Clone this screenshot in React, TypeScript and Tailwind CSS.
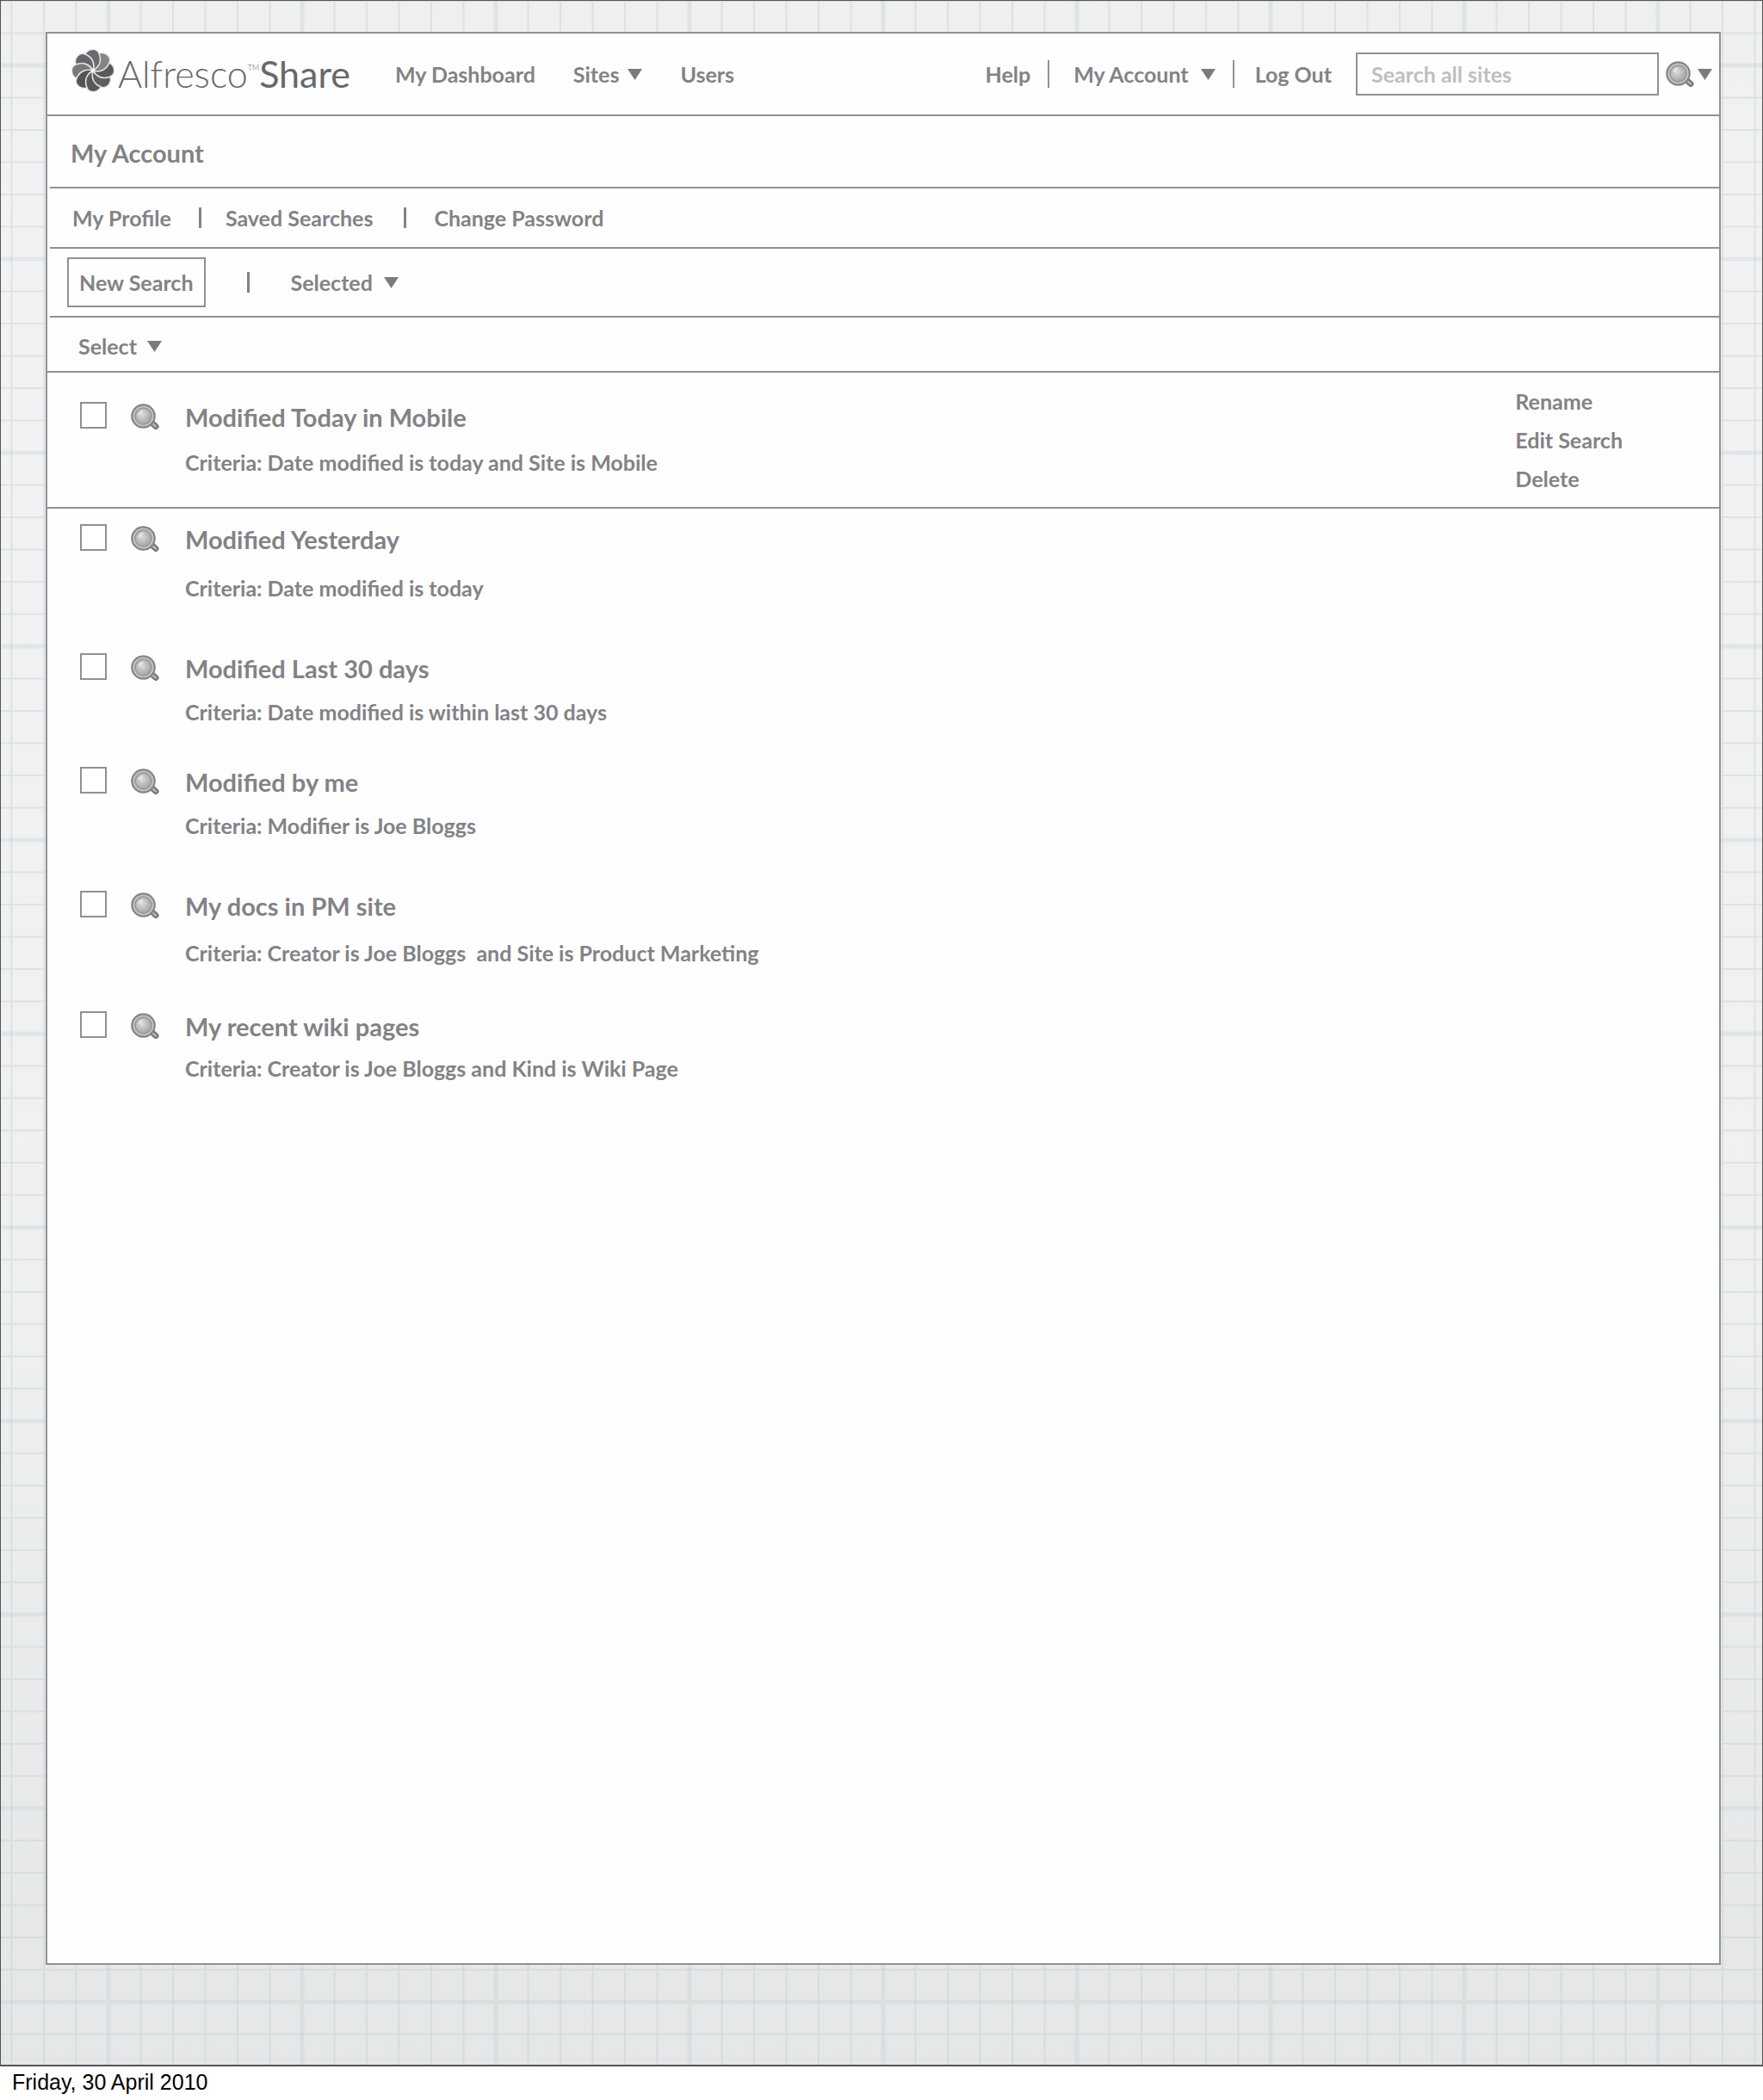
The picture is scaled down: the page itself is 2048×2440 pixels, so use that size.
const savedSearches = [
    { id: 'today-mobile', title: 'Modified Today in Mobile', criteria: 'Criteria: Date modified is today and Site is Mobile', row: 'pt-8 pb-8.5', gap: 'gap-3.5', active: true },
    { id: 'yesterday', title: 'Modified Yesterday', criteria: 'Criteria: Date modified is today', row: 'pt-4', gap: 'gap-4.5' },
    { id: 'last-30', title: 'Modified Last 30 days', criteria: 'Criteria: Date modified is within last 30 days', row: 'pt-14', gap: 'gap-3' },
    { id: 'by-me', title: 'Modified by me', criteria: 'Criteria: Modifier is Joe Bloggs', row: 'pt-11', gap: 'gap-3' },
    { id: 'pm-docs', title: 'My docs in PM site', criteria: 'Criteria: Creator is Joe Bloggs\u00a0 and Site is Product Marketing', row: 'pt-14', gap: 'gap-4' },
    { id: 'wiki', title: 'My recent wiki pages', criteria: 'Criteria: Creator is Joe Bloggs and Kind is Wiki Page', row: 'pt-12', gap: 'gap-2.5' },
];

function Caret() {
    return (
        <svg className="h-[13px] w-[17px] shrink-0" viewBox="0 0 17 13" aria-hidden="true">
            <path d="M0 0h17L8.500 13z" fill="#7b7a7d" />
        </svg>
    );
}

function Magnifier() {
    return (
        <svg className="h-[31px] w-[33px] shrink-0" viewBox="0 0 33 31" aria-hidden="true">
            <defs>
                <radialGradient id="lens" cx="0.42" cy="0.4" r="0.65">
                    <stop offset="0" stopColor="#dededf" />
                    <stop offset="0.5" stopColor="#bdbdbf" />
                    <stop offset="1" stopColor="#a2a2a4" />
                </radialGradient>
            </defs>
            <path d="M23 21l6 5.500" stroke="#77777a" strokeWidth="7" strokeLinecap="round" />
            <path d="M25.500 23.500l3.500 3" stroke="#b5b5b7" strokeWidth="2.500" strokeLinecap="round" />
            <circle cx="14.500" cy="14.500" r="13.200" fill="#c3c3c5" stroke="#858588" strokeWidth="2.200" />
            <circle cx="14.500" cy="14.500" r="9.500" fill="url(#lens)" stroke="#98989b" strokeWidth="1.500" />
            <path d="M8.500 13.500c.5-3.500 3-5.500 6-5.500-1 2.500-3 4.500-6 5.500z" fill="#e9e9ea" />
        </svg>
    );
}

const petals = ['#6a6a6d', '#858588', '#59595c', '#5e5e61', '#58585b', '#545457', '#79797c', '#66666a'];

function Flower() {
    return (
        <svg className="mb-2 h-[50px] w-[50px] shrink-0" viewBox="-25 -25 50 50" aria-hidden="true">
            {petals.map((fill, i) => (
                <path
                    key={i}
                    d="M0 0C2-6 1-15-9-19C-6-25.500 4-27 7.100-19.800C11.300-9.900 5.660-2.830 0 0z"
                    fill={fill}
                    stroke="#e4e4e6"
                    strokeWidth="1.400"
                    transform={`rotate(${i * 45})`}
                />
            ))}
            <circle r="2.500" fill="#f4f4f5" />
        </svg>
    );
}

// Squared paper behind the wireframe, every sixth line is heavier
function GridPaper() {
    return (
        <svg className="absolute inset-0 h-full w-full" aria-hidden="true">
            <defs>
                <linearGradient id="paper" x1="0" y1="0" x2="0" y2="1">
                    <stop offset="0" stopColor="#eeefee" />
                    <stop offset="0.1" stopColor="#f2f2f4" />
                    <stop offset="0.6" stopColor="#eff0f0" />
                    <stop offset="1" stopColor="#e4e6e7" />
                </linearGradient>
                <pattern id="squares" x="122" y="72" width="225" height="225" patternUnits="userSpaceOnUse">
                    <path d="M40.500 0v225M78 0v225M115.500 0v225M153 0v225M190.500 0v225M0 40.500h225M0 78h225M0 115.500h225M0 153h225M0 190.500h225" stroke="#bccdd0" strokeOpacity="0.38" strokeWidth="2" />
                    <path d="M3 0v225M0 3h225" stroke="#c0cfd3" strokeOpacity="0.32" strokeWidth="5" />
                </pattern>
            </defs>
            <rect width="100%" height="100%" fill="url(#paper)" />
            <rect width="100%" height="100%" fill="url(#squares)" />
        </svg>
    );
}

function App() {
    return (
        <div className="flex min-h-screen flex-col bg-white">
            <div className="relative flex flex-1 flex-col border border-b-2 border-[#545456] pt-9 pr-12 pb-[116px] pl-13">
                <GridPaper />
                <main className="relative flex-1 border-2 border-[#919094] bg-[#fefefe] font-['Lato',sans-serif] text-[25px] leading-9 font-bold text-[#838286]">
                    <header className="flex h-24 items-center border-b-2 border-[#919094] pr-2 pl-7">
                        <a href="#" aria-label="Alfresco Share" className="flex items-center gap-1 text-[43px] leading-[50px] font-normal text-[#68686b]">
                            <Flower />
                            <span className="flex items-center">
                                <span className="font-light">Alfresco</span>
                                <span className="self-start text-[9px] leading-9 font-light">TM</span>
                                <span>Share</span>
                            </span>
                        </a>
                        <nav className="ml-13 flex items-center gap-11">
                            <a href="#">My Dashboard</a>
                            <button type="button" className="flex items-center gap-2.5">Sites <Caret /></button>
                            <a href="#">Users</a>
                        </nav>
                        <nav className="ml-auto flex items-center">
                            <a href="#">Help</a>
                            <span className="mr-7 ml-5 h-8 w-0.5 bg-[#919094]" />
                            <button type="button" className="flex items-center gap-3.5">My Account <Caret /></button>
                            <span className="mr-6 ml-5 h-8 w-0.5 bg-[#919094]" />
                            <a href="#">Log Out</a>
                        </nav>
                        <form className="ml-7 flex items-center gap-2">
                            <input
                                type="text"
                                aria-label="Search all sites"
                                placeholder="Search all sites"
                                className="h-[50px] w-[352px] border-2 border-[#919094] px-4 placeholder:text-[#bfbec1] focus:outline-none"
                            />
                            <button type="button" aria-label="Search options" className="flex items-center gap-1">
                                <Magnifier />
                                <Caret />
                            </button>
                        </form>
                    </header>
                    <div className="ml-[3px] flex h-[84px] items-center border-b-2 border-[#919094] pt-1 pl-6">
                        <h1 className="text-[29px] leading-10">My Account</h1>
                    </div>
                    <nav className="ml-[3px] flex h-[70px] items-center border-b-2 border-[#919094] pl-6.5">
                        <a href="#">My Profile</a>
                        <span className="mr-7 ml-8 h-6 w-[3px] bg-[#838286]" />
                        <a href="#">Saved Searches</a>
                        <span className="mr-8 ml-9 h-6 w-[3px] bg-[#838286]" />
                        <a href="#">Change Password</a>
                    </nav>
                    <div className="ml-[3px] flex h-20 items-center border-b-2 border-[#919094] pl-5">
                        <button type="button" className="h-[58px] border-2 border-[#919094] px-3">New Search</button>
                        <span className="mx-12 h-6 w-[3px] bg-[#838286]" />
                        <label className="flex items-center gap-3">
                            <select aria-label="Selected items" className="appearance-none focus:outline-none">
                                <option>Selected</option>
                            </select>
                            <Caret />
                        </label>
                    </div>
                    <div className="flex h-16 items-center border-b-2 border-[#919094] pt-1 pl-9">
                        <label className="flex items-center gap-3">
                            <select aria-label="Select searches" className="appearance-none focus:outline-none">
                                <option>Select</option>
                            </select>
                            <Caret />
                        </label>
                    </div>
                    <ul>
                        {savedSearches.map((search) => (
                            <li key={search.id} className={search.active ? 'flex justify-between border-b-2 border-[#919094]' : 'flex'}>
                                <div className={`flex items-start pl-9.5 ${search.row}`}>
                                    <input id={search.id} type="checkbox" className="mt-0.5 mr-7 size-[31px] appearance-none border-2 border-[#919094] bg-white" />
                                    <span className="mt-1 mr-7.5"><Magnifier /></span>
                                    <div className={`flex flex-col ${search.gap}`}>
                                        <label htmlFor={search.id} className="text-[29px] leading-10">{search.title}</label>
                                        <p>{search.criteria}</p>
                                    </div>
                                </div>
                                {search.active && (
                                    <div className="mr-28 flex flex-col self-center leading-[45px]">
                                        <a href="#">Rename</a>
                                        <a href="#">Edit Search</a>
                                        <a href="#">Delete</a>
                                    </div>
                                )}
                            </li>
                        ))}
                    </ul>
                </main>
            </div>
            <footer className="h-[39px] px-3.5 font-['Liberation_Sans',sans-serif] text-[25px] leading-9 text-black">Friday, 30 April 2010</footer>
        </div>
    );
}

export default App;
